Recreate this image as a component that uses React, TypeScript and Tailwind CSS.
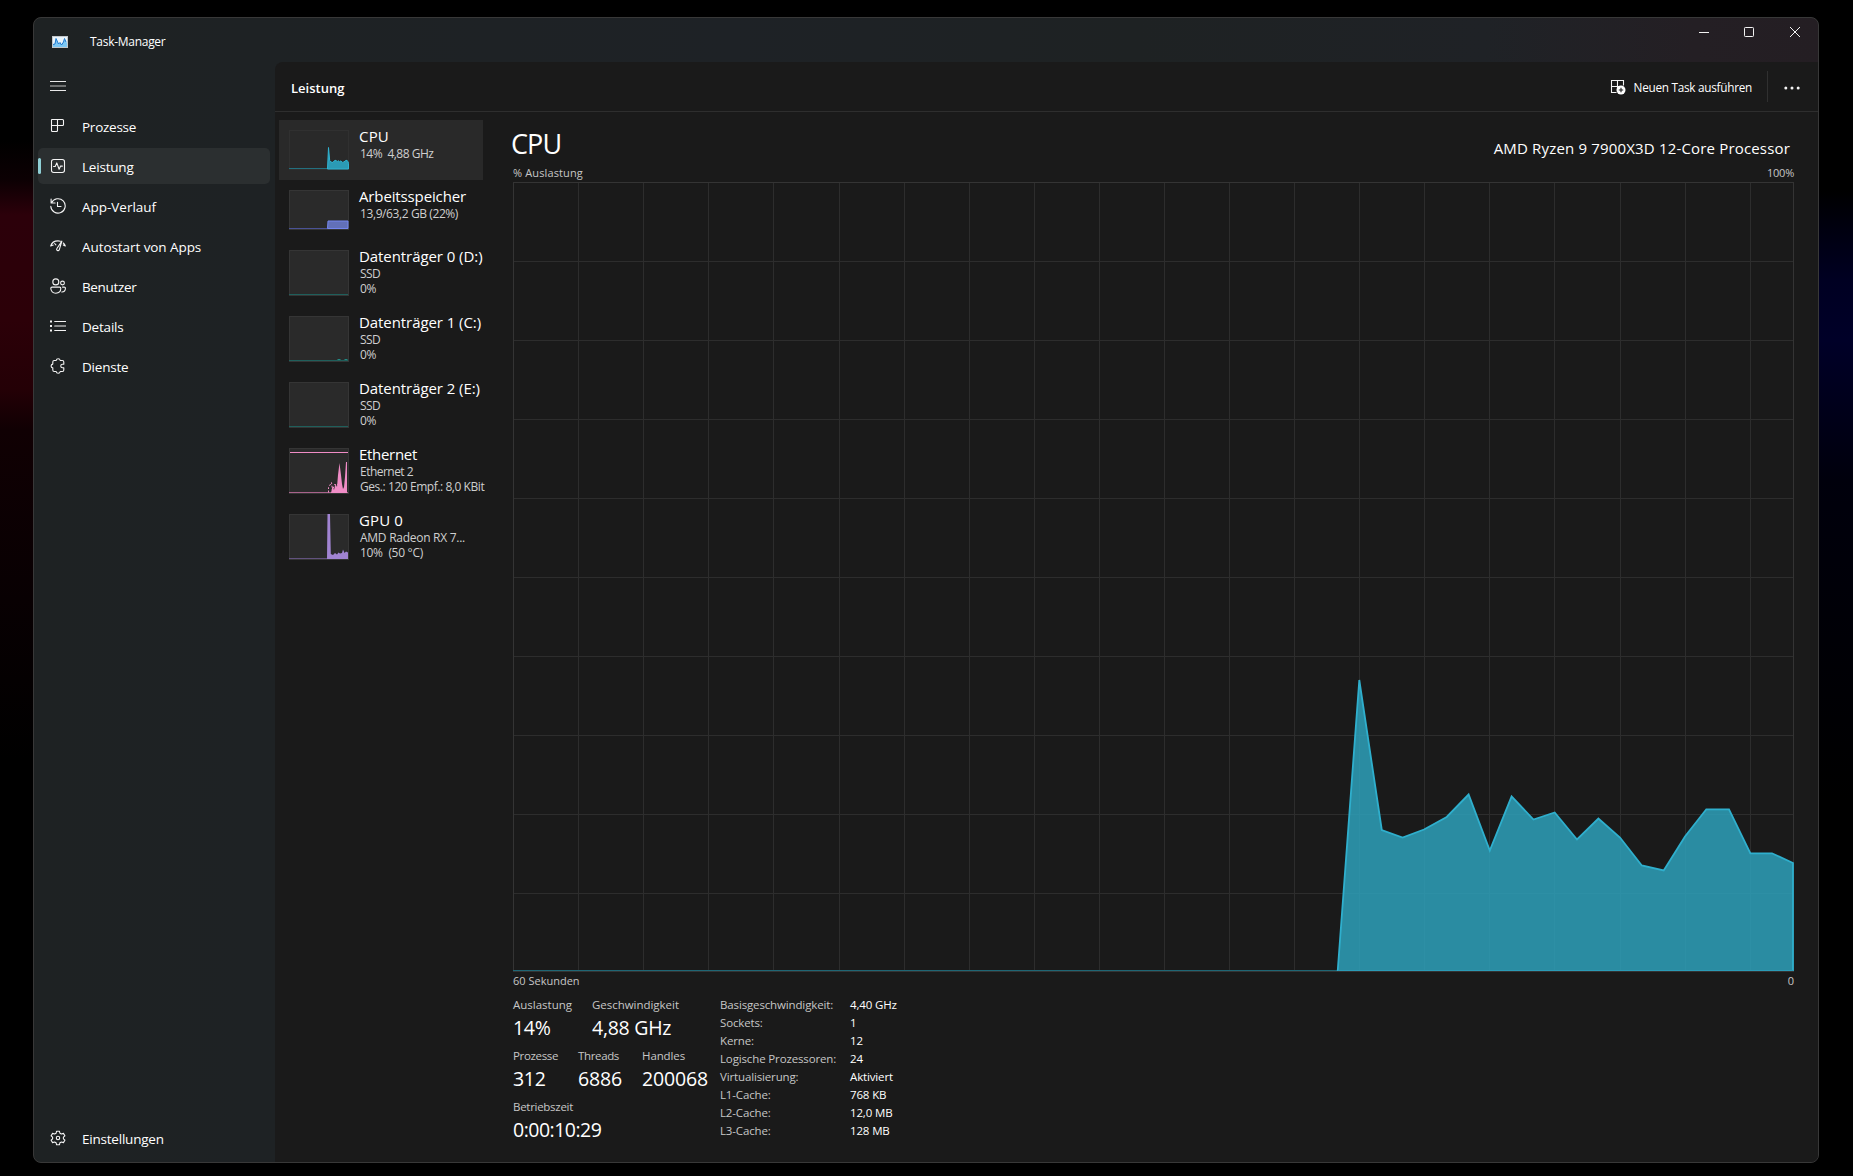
import React from 'react'

type IconProps = { children: React.ReactNode }

function Icon({ children }: IconProps) {
  return (
    <svg width="16" height="16" viewBox="0 0 16 16" fill="none" stroke="#f4f4f4" strokeWidth="1.1" strokeLinecap="round" strokeLinejoin="round" className="shrink-0">
      {children}
    </svg>
  )
}

const icons = {
  processes: (
    <Icon>
      <path d="M2 1.500h10.500a1 1 0 0 1 1 1v4a1 1 0 0 1-1 1H7.500v5a1 1 0 0 1-1 1H2.500a1 1 0 0 1-1-1v-10.500a.5.5 0 0 1 .5-.5zM7.500 1.500v6M1.500 7.500h6" />
    </Icon>
  ),
  performance: (
    <Icon>
      <rect x="1.500" y="1.500" width="13" height="13" rx="2.200" />
      <path d="M3.600 8.500h1.600l1.600-3.600 2.300 6.400 1.500-3.200h1.800" />
    </Icon>
  ),
  history: (
    <Icon>
      <path d="M1.100 1v4h4M1.500 4.800A7.200 7.200 0 1 1 .8 8.200M7.500 4.200v4.300h3.500" />
    </Icon>
  ),
  startup: (
    <Icon>
      <path d="M.7 8C1.700 4.800 4.600 2.900 8 2.900c.9 0 1.700.1 2.400.3M13.300 5c.9.8 1.600 1.800 2 3M.7 8l2.500-.9M15.300 8l-2-1M11.900 3.100L9.300 11.600a1.350 1.350 0 1 1-2.400-1.100zM4.700 5.500l1.200 1.300" />
    </Icon>
  ),
  users: (
    <Icon>
      <circle cx="5.800" cy="3.900" r="3" />
      <circle cx="12.500" cy="5" r="1.900" />
      <path d="M2 9.100h7.600a1.200 1.200 0 0 1 1.200 1.200c0 3-2.100 4.900-5 4.900s-5-1.900-5-4.900A1.200 1.200 0 0 1 2 9.100zM12.500 9.100h1.700a1.200 1.200 0 0 1 1.200 1.200c0 2.400-1.400 3.700-3.600 3.700" />
    </Icon>
  ),
  details: (
    <Icon>
      <path d="M4.700 3.500h11M4.700 8h11M4.700 12.500h11" />
      <path strokeWidth="2" strokeLinecap="butt" d="M0 3.500h2M0 8h2M0 12.500h2" />
    </Icon>
  ),
  services: (
    <Icon>
      <path d="M4.200 2.500h2c.2-1.200 1-1.800 2-1.800s1.800.6 2 1.800h2.200a1.400 1.400 0 0 1 1.400 1.400v2.300h-1.300a1.700 1.700 0 0 0 0 3.500h1.300v2.400a1.400 1.400 0 0 1-1.400 1.400h-2.200c-.2 1.200-1 1.800-2 1.800s-1.800-.6-2-1.800h-2a1.400 1.400 0 0 1-1.400-1.400v-2.200c-1.100-.2-1.700-.9-1.700-1.900s.6-1.700 1.700-1.900V3.900a1.400 1.400 0 0 1 1.400-1.400z" />
    </Icon>
  ),
  settings: (
    <Icon>
      <circle cx="8" cy="8" r="1.700" />
      <path d="M6.600 1.200h2.800l.5 2 1.500.8 2-.6 1.500 2.400-1.500 1.400v1.600l1.500 1.400-1.500 2.400-2-.6-1.500.8-.5 2H6.600l-.5-2-1.500-.8-2 .6-1.500-2.400 1.500-1.400V7.200L1.100 5.800l1.500-2.400 2 .6 1.500-.8z" />
    </Icon>
  ),
}

type NavProps = { icon: React.ReactNode; label: string; tracking: string; active?: boolean }

const nav: NavProps[] = [
  { icon: icons.processes, label: 'Prozesse', tracking: 'tracking-[-0.25px]' },
  { icon: icons.performance, label: 'Leistung', tracking: 'tracking-[-0.2px]', active: true },
  { icon: icons.history, label: 'App-Verlauf', tracking: 'tracking-[-0.02px]' },
  { icon: icons.startup, label: 'Autostart von Apps', tracking: 'tracking-[-0.07px]' },
  { icon: icons.users, label: 'Benutzer', tracking: 'tracking-[-0.35px]' },
  { icon: icons.details, label: 'Details', tracking: 'tracking-[-0.2px]' },
  { icon: icons.services, label: 'Dienste', tracking: 'tracking-[-0.2px]' },
]

function NavItem({ icon, label, tracking, active }: NavProps) {
  return (
    <div className={`relative flex h-9 items-center gap-4 rounded-[5px] pl-3 ${active ? 'bg-[#2b2f30]' : ''}`}>
      {active && <span className="absolute left-0 top-[10px] h-4 w-[3px] rounded-full bg-[#8fd0d6]" />}
      {icon}
      <span className={`pt-[2px] text-[13.5px] leading-5 ${tracking}`}>{label}</span>
    </div>
  )
}

type PerfProps = {
  title: string
  titleTracking: string
  lines: { text: string; tracking: string }[]
  height: number
  base: string
  graph?: React.ReactNode
  active?: boolean
}

const diskLines = [
  { text: 'SSD', tracking: 'tracking-[-0.6px]' },
  { text: '0%', tracking: 'tracking-[-0.3px]' },
]

const perf: PerfProps[] = [
  {
    title: 'CPU', titleTracking: 'tracking-[0.2px]', lines: [{ text: '14%\u00a0 4,88 GHz', tracking: 'tracking-[-0.5px]' }], height: 40, base: '#23707f', active: true,
    graph: <path fill="#2b9ab5" stroke="#30b3d0" d="M38.500 39l1-21.500 1.200 13 1.300 1.500 2 .5 1-1.500 2-.8 1 1.500 1-1 1.500 1 1.500-.8 1.500 1.500 1.500-.5 1.500-1.300 1.500-.3 1 1.500.5 1.500V39z" />,
  },
  {
    title: 'Arbeitsspeicher', titleTracking: 'tracking-[-0.13px]', lines: [{ text: '13,9/63,2 GB (22%)', tracking: 'tracking-[-0.4px]' }], height: 40, base: '#4a5296',
    graph: <path fill="#6270b8" stroke="#7486ee" d="M38.500 38.500l.5-7.500h20v7.500z" />,
  },
  { title: 'Datenträger 0 (D:)', titleTracking: 'tracking-[-0.07px]', lines: diskLines, height: 46, base: '#1f5f5b' },
  {
    title: 'Datenträger 1 (C:)', titleTracking: 'tracking-[-0.07px]', lines: diskLines, height: 46, base: '#1f5f5b',
    graph: <path stroke="#228a84" d="M48.500 43.500h3M55.500 43.500h3" />,
  },
  { title: 'Datenträger 2 (E:)', titleTracking: 'tracking-[-0.07px]', lines: diskLines, height: 46, base: '#1f5f5b' },
  {
    title: 'Ethernet', titleTracking: 'tracking-[-0.3px]', height: 46, base: '#a8628b',
    lines: [{ text: 'Ethernet 2', tracking: 'tracking-[-0.53px]' }, { text: 'Ges.: 120 Empf.: 8,0 KBit', tracking: 'tracking-[-0.44px]' }],
    graph: (
      <g>
        <path stroke="#f08cc6" d="M1 4.500h58" />
        <path stroke="#f08cc6" strokeDasharray="2 1.500" d="M39.500 44.500v-5l3-5 1 8 2-6h4l1-6" />
        <path fill="#f08cc6" d="M42 45l1.500-7 1.500 4 1.500-6 1.500 3 1-12 1.500-12 1.500 12 1 9 1 5 1-2 1-10 1-15 1 0V45z" />
      </g>
    ),
  },
  {
    title: 'GPU 0', titleTracking: 'tracking-[0.13px]', height: 46, base: '#62527e',
    lines: [{ text: 'AMD Radeon RX 7...', tracking: 'tracking-[-0.27px]' }, { text: '10%\u00a0 (50 °C)', tracking: 'tracking-[-0.3px]' }],
    graph: <path fill="#a184d2" d="M38 45L38.500 0h2.500l.8 40 2.200 1 2-2 2 1.500 1.500-2 1.500 1 2-.5 1-3.500 1.500 3.500 1.500-1.500 2 1V45z" />,
  },
]

function PerfItem({ title, titleTracking, lines, height, base, graph, active }: PerfProps) {
  return (
    <div className={`flex w-[204px] gap-[10px] pl-[10px] pt-[10px] ${height === 40 ? 'h-[60px]' : 'h-[66px]'} ${active ? 'bg-[#292929]' : ''}`}>
      <svg width="60" height={height} viewBox={`0 0 60 ${height}`} fill="none" className="shrink-0">
        <rect x="0.5" y="0.5" width="59" height={height - 1} fill={active ? '#292929' : '#2a2a2a'} stroke={active ? '#303030' : '#353535'} />
        <path stroke={base} d={`M0 ${height - 1.5}h59`} />
        {graph}
      </svg>
      <div className="-mt-[4px] w-[127px] shrink-0 whitespace-nowrap">
        <div className={`text-[15px] leading-5 ${titleTracking}`}>{title}</div>
        {lines.map(({ text, tracking }) => (
          <div key={text} className={`pl-px text-[12px] leading-[15px] text-[#cfcfcf] ${tracking}`}>{text}</div>
        ))}
      </div>
    </div>
  )
}

const columns = [65, 130, 195, 260, 326, 391, 456, 521, 586, 651, 716, 781, 846, 911, 976, 1041, 1107, 1172, 1237]
const rows = [79, 158, 237, 316, 395, 474, 553, 632, 711]
const series =
  '824.7,789 846.3,498 868.8,648 889.6,655.5 911,647.5 933.7,635 955.6,612.5 976.8,668.5 998.6,614.5 1020.5,637.5 1041.7,630.5 1064,657.5 1085.4,636.5 1107,655.5 1128.8,683.5 1150.7,688.5 1172,654.5 1193.3,627.3 1216,627.3 1237.4,671.3 1259,671.3 1280,681'

function Chart() {
  return (
    <svg width="1281" height="790" viewBox="0 0 1281 790" fill="none" className="block">
      <g stroke="#2d2d2d">
        {columns.map((x) => <path key={x} d={`M${x + 0.5} 0v790`} />)}
        {rows.map((y) => <path key={y} d={`M0 ${y + 0.5}h1280`} />)}
        <rect x="0.5" y="0.5" width="1280" height="789" stroke="#343434" />
      </g>
      <path d="M0 788.500h1280" stroke="#1f6674" />
      <polygon points={`${series} 1280,789`} fill="#2da0b9" fillOpacity="0.86" />
      <polyline points={`${series} 1280,789`} stroke="#2fafcd" strokeWidth="1.800" />
      <path d="M825 788.500h455" stroke="#2b9bb7" />
    </svg>
  )
}

type StatProps = { label: string; value: string; className?: string; labelTracking: string; valueTracking: string }

function Stat({ label, value, className, labelTracking, valueTracking }: StatProps) {
  return (
    <div className={className}>
      <div className={`text-[11.5px] leading-[18px] text-[#c6c6c6] ${labelTracking}`}>{label}</div>
      <div className={`mt-px text-[19.5px] leading-[26px] ${valueTracking}`}>{value}</div>
    </div>
  )
}

const facts: [string, string][] = [
  ['Basisgeschwindigkeit:', '4,40 GHz'],
  ['Sockets:', '1'],
  ['Kerne:', '12'],
  ['Logische Prozessoren:', '24'],
  ['Virtualisierung:', 'Aktiviert'],
  ['L1-Cache:', '768 KB'],
  ['L2-Cache:', '12,0 MB'],
  ['L3-Cache:', '128 MB'],
]

export default function App() {
  return (
    <div className="flex h-[1176px] w-[1853px] overflow-hidden bg-black font-['Open_Sans','Noto_Sans',sans-serif] text-white">
      <div className="w-[33px] shrink-0 bg-[linear-gradient(180deg,#000_0,#000_140px,#0c0003_180px,#2c000a_215px,#2c0008_320px,#240006_390px,#100003_430px,#080002_600px,#000_760px)]" />
      <div className="mt-[17px] flex h-[1146px] w-[1786px] shrink-0 flex-col overflow-hidden rounded-[8px] border border-[#383838] bg-[#1e2223] bg-[linear-gradient(90deg,#1e2223_0,#1e2224_220px,#1e2226_700px,#1e2223_1100px,#1f2226_1450px,#241f24_1660px,#241e23_1784px)]">
        <div className="flex h-11 shrink-0 justify-between">
          <div className="flex items-center pl-[18px] pt-[3px]">
            <svg width="16" height="12" viewBox="0 0 16 12" fill="none">
              <rect width="16" height="12" fill="#c3c8cc" />
              <rect x="1" y="1" width="14" height="10" fill="#e9f4fb" />
              <path fill="#7cc8f5" d="M1 11V8.500L3 8l1-5.500L6.500 8 8 6.500 9.500 9l2-3 1-3.500 1.500 3.500 1 .5v4.500z" />
              <path stroke="#1d78cf" d="M1 8.500L3 8l1-5.500L6.500 8 8 6.500 9.500 9l2-3 1-3.500 1.500 3.500" />
            </svg>
            <span className="ml-[22px] pt-px text-[12px] tracking-[-0.28px]">Task-Manager</span>
          </div>
          <svg width="102" height="12" viewBox="0 0 102 12" fill="none" stroke="#f2f2f2" className="mr-[17px] mt-[8px]">
            <path d="M0 6.500h10" />
            <rect x="45.500" y="1.500" width="9" height="9" rx="0.800" />
            <path d="M91 1l10 10M101 1L91 11" />
          </svg>
        </div>
        <div className="flex min-h-0 flex-1">
          <nav className="flex w-[241px] shrink-0 flex-col pb-[6px] pl-1 pr-[5px]">
            <svg width="16" height="16" viewBox="0 0 16 16" stroke="#e8e8e8" className="mb-[14px] ml-3 mt-4">
              <path d="M0 3.500h16M0 12.500h16" />
              <path d="M0 8h16" strokeWidth="1.200" stroke="#c0c0c0" />
            </svg>
            <div className="flex flex-1 flex-col gap-1">
              {nav.map((item) => <NavItem key={item.label} {...item} />)}
            </div>
            <NavItem icon={icons.settings} label="Einstellungen" tracking="tracking-[-0.22px]" />
          </nav>
          <main className="flex min-w-0 flex-1 flex-col rounded-tl-[8px] bg-[#1a1a1a]">
            <header className="flex h-[50px] shrink-0 items-center border-b border-[#2e2e2e]">
              <h1 className="flex-1 pl-4 pt-1 text-[13px] font-semibold">Leistung</h1>
              <svg width="16" height="16" viewBox="0 0 16 16" fill="none" stroke="#f4f4f4" strokeWidth="1.100">
                <path d="M6.500 13.500h-5v-12h12v5M7.500 1.500v6M1.500 7.500h6M7.500 7.500v5M7.500 7.500h5" />
                <circle cx="11" cy="11" r="4.500" fill="#fff" stroke="none" />
                <path d="M8.800 11h4.400M11 8.800v4.400" stroke="#1a1a1a" />
              </svg>
              <span className="ml-2 pt-[3px] text-[11.75px] tracking-[-0.26px]">Neuen Task ausführen</span>
              <span className="ml-[15px] h-[31px] w-px bg-[#303030]" />
              <svg width="16" height="4" viewBox="0 0 16 4" fill="#f4f4f4" className="ml-4 mr-[18px] mt-[2px]">
                <circle cx="1.800" cy="2" r="1.500" />
                <circle cx="8" cy="2" r="1.500" />
                <circle cx="14.200" cy="2" r="1.500" />
              </svg>
            </header>
            <div className="flex flex-1">
              <section className="w-[238px] shrink-0 pl-1 pt-2">
                {perf.map((item) => <PerfItem key={item.title} {...item} />)}
              </section>
              <section className="w-[1281px] shrink-0 pt-[14px]">
                <div className="flex h-9 items-baseline justify-between">
                  <h2 className="-ml-[2px] text-[27px] leading-9 tracking-[-0.9px]">CPU</h2>
                  <span className="mr-1 text-[15px] tracking-[0.17px]">AMD Ryzen 9 7900X3D 12-Core Processor</span>
                </div>
                <div className="mb-px mt-[3px] flex justify-between text-[11px] leading-4 text-[#c6c6c6]">
                  <span className="tracking-[0.13px]">% Auslastung</span>
                  <span className="tracking-[-0.24px]">100%</span>
                </div>
                <Chart />
                <div className="mt-px flex justify-between text-[11px] leading-4 text-[#c6c6c6]">
                  <span>60 Sekunden</span>
                  <span>0</span>
                </div>
                <div className="mt-[7px] flex">
                  <div className="flex w-[207px] shrink-0 flex-col gap-[6px]">
                    <div className="flex">
                      <Stat className="w-[79px]" label="Auslastung" value="14%" labelTracking="tracking-[0px]" valueTracking="tracking-[-0.3px]" />
                      <Stat label="Geschwindigkeit" value="4,88 GHz" labelTracking="tracking-[-0.03px]" valueTracking="tracking-[-0.25px]" />
                    </div>
                    <div className="flex">
                      <Stat className="w-[65px]" label="Prozesse" value="312" labelTracking="tracking-[-0.35px]" valueTracking="tracking-[-0.3px]" />
                      <Stat className="w-[64px]" label="Threads" value="6886" labelTracking="tracking-[-0.35px]" valueTracking="tracking-[-0.15px]" />
                      <Stat label="Handles" value="200068" labelTracking="tracking-[-0.1px]" valueTracking="tracking-[-0.15px]" />
                    </div>
                    <Stat label="Betriebszeit" value="0:00:10:29" labelTracking="tracking-[-0.28px]" valueTracking="tracking-[-0.5px]" />
                  </div>
                  <dl className="grid auto-rows-[18px] grid-cols-[130px_auto] text-[11.5px] leading-[18px] tracking-[-0.14px]">
                    {facts.map(([label, value]) => (
                      <React.Fragment key={label}>
                        <dt className="text-[#c6c6c6]">{label}</dt>
                        <dd>{value}</dd>
                      </React.Fragment>
                    ))}
                  </dl>
                </div>
              </section>
            </div>
          </main>
        </div>
      </div>
      <div className="flex-1 bg-[linear-gradient(180deg,#000_0,#000_190px,#000010_230px,#000022_280px,#000028_340px,#00001c_400px,#00000c_480px,#000006_640px,#000_800px)]" />
    </div>
  )
}
